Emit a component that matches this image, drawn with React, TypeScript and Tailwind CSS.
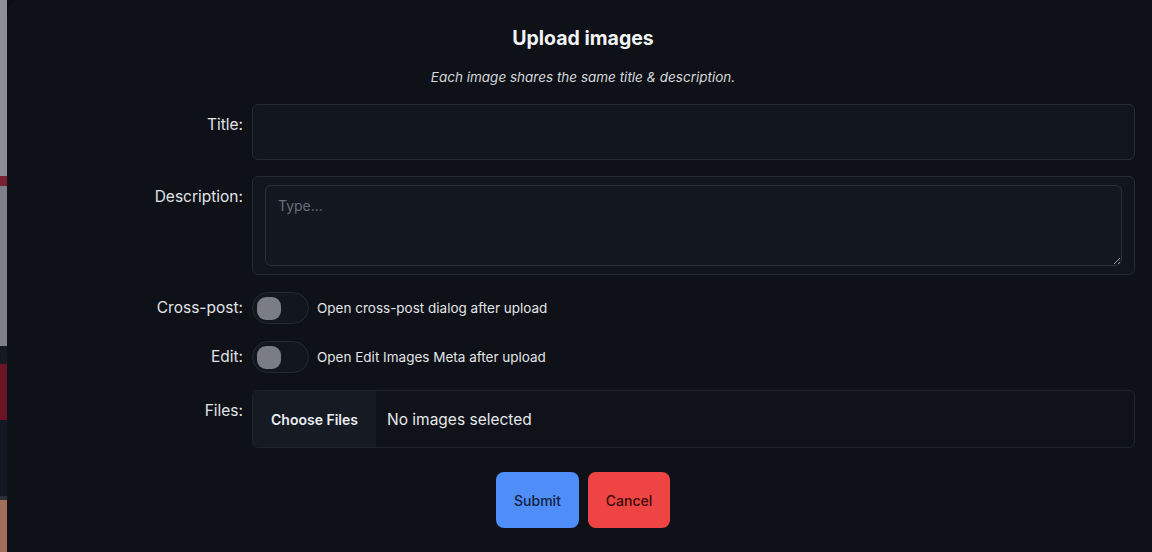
import { useState } from "react";

const Toggle = ({ on, onClick }: { on: boolean; onClick: () => void }) => (
  <button
    type="button"
    onClick={onClick}
    className={`flex h-[32px] w-[57px] shrink-0 items-center rounded-full border border-[#252a33] bg-[#12161d] px-[4px] ${
      on ? "justify-end" : "justify-start"
    }`}
  >
    <span className="h-[23px] w-[24px] rounded-[9px] bg-[#7b7d84]" />
  </button>
);

const Backdrop = () => (
  <div className="flex w-[7px] shrink-0 flex-col">
    <div className="h-[176px] bg-[#8c8f96]" />
    <div className="h-[10px] bg-[#7a2030]" />
    <div className="h-[160px] bg-[#7d8088]" />
    <div className="h-[18px] bg-[#151a22]" />
    <div className="h-[56px] bg-[#6a1526]" />
    <div className="h-[76px] bg-[#131923]" />
    <div className="h-[4px] bg-[#2a2f38]" />
    <div className="flex-1 bg-[#a06f58]" />
  </div>
);

export default function App() {
  const [title, setTitle] = useState("");
  const [desc, setDesc] = useState("");
  const [crossPost, setCrossPost] = useState(false);
  const [editMeta, setEditMeta] = useState(false);

  return (
    <div
      className="flex h-[552px] w-[1152px] overflow-hidden bg-[#0b0d12] text-[#e6e8ec]"
      style={{ fontFamily: "Inter, 'Noto Sans', sans-serif" }}
    >
      <Backdrop />
      <div className="w-[1152px] shrink-0 rounded-tl-[14px] bg-[#0e1117] pt-6">
        <h1 className="text-center text-[19.5px] leading-7 font-bold text-[#f2f3f5]">
          Upload images
        </h1>
        <p className="mt-[15px] text-center text-[13.5px] leading-5 italic text-[#d6d8dc]">
          Each image shares the same title &amp; description.
        </p>

        <div className="mt-[17px] grid grid-cols-[236px_1fr] gap-x-[9px] gap-y-[17px] pr-6">
          <label className="pt-[9px] text-right text-[15.5px] leading-6 text-[#e2e4e8]">Title:</label>
          <input
            value={title}
            onChange={(e) => setTitle(e.target.value)}
            className="-mb-px h-[56px] rounded-md border border-[#252a33] bg-[#11151c] px-3 text-[15px] outline-none"
          />

          <label className="pt-[9px] text-right text-[15.5px] leading-6 text-[#e2e4e8]">Description:</label>
          <div className="rounded-md border border-[#252a33] bg-[#11151c] px-[12px] py-[8px]">
            <textarea
              value={desc}
              onChange={(e) => setDesc(e.target.value)}
              placeholder="Type..."
              className="block h-[81px] w-full resize-y rounded-md border border-[#2a2f39] bg-[#121720] px-3 py-[10px] text-[14px] leading-5 outline-none placeholder:text-[#6b6f78]"
            />
          </div>

          <label className="self-center text-right text-[15.5px] leading-6 text-[#e2e4e8]">Cross-post:</label>
          <div className="flex items-center gap-2">
            <Toggle on={crossPost} onClick={() => setCrossPost(!crossPost)} />
            <span className="text-[13.5px] text-[#e2e4e8]">Open cross-post dialog after upload</span>
          </div>

          <label className="self-center text-right text-[15.5px] leading-6 text-[#e2e4e8]">Edit:</label>
          <div className="flex items-center gap-2">
            <Toggle on={editMeta} onClick={() => setEditMeta(!editMeta)} />
            <span className="text-[13.5px] text-[#e2e4e8]">Open Edit Images Meta after upload</span>
          </div>

          <label className="pt-[9px] text-right text-[15.5px] leading-6 text-[#e2e4e8]">Files:</label>
          <div className="flex h-[58px] items-center overflow-hidden rounded-md border border-[#1f242c] bg-[#0f1218]">
            <button
              type="button"
              className="h-full w-[123px] bg-[#151a23] text-[14px] font-semibold text-[#eceef1]"
            >
              Choose Files
            </button>
            <span className="pt-px pl-[11px] text-[15.5px] text-[#e6e8ec]">No images selected</span>
          </div>
        </div>

        <div className="mt-[24px] flex justify-center gap-[9px]">
          <button
            type="button"
            className="h-[56px] w-[83px] rounded-lg bg-[#4f8df9] text-[14px] font-medium text-[#13203d]"
          >
            Submit
          </button>
          <button
            type="button"
            className="h-[56px] w-[82px] rounded-lg bg-[#ef4444] text-[14px] font-medium text-[#3b0b0b]"
          >
            Cancel
          </button>
        </div>
      </div>
    </div>
  );
}
